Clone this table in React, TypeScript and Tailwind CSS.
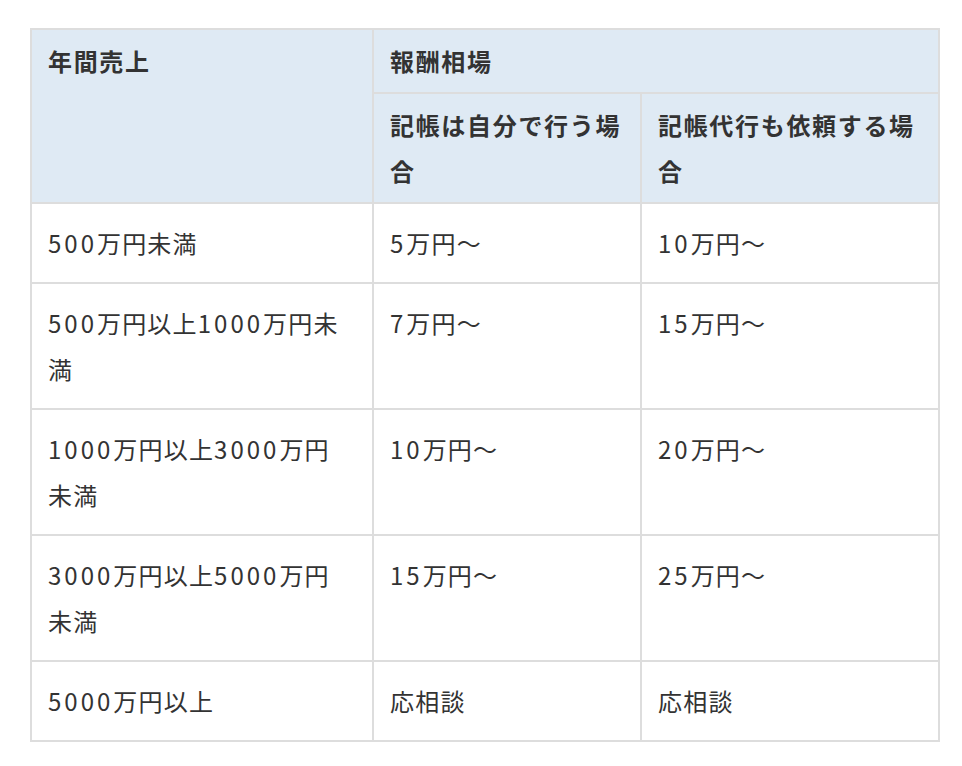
import { Fragment } from "react";

// 数字だけ少し広めに詰める（参照の数字幅に合わせる）
function Txt({ s }: { s: string }) {
  const parts = s.split(/(\d+)/).filter((p) => p !== "");
  return (
    <>
      {parts.map((p, i) =>
        /^\d+$/.test(p) ? (
          <span key={i} className="tracking-[0.125em]">
            {p}
          </span>
        ) : (
          <Fragment key={i}>{p}</Fragment>
        )
      )}
    </>
  );
}

export default function App() {
  const rows = [
    ["500万円未満", "5万円〜", "10万円〜"],
    ["500万円以上1000万円未満", "7万円〜", "15万円〜"],
    ["1000万円以上3000万円未満", "10万円〜", "20万円〜"],
    ["3000万円以上5000万円未満", "15万円〜", "25万円〜"],
    ["5000万円以上", "応相談", "応相談"],
  ];

  const th =
    "border-2 border-[#dddddd] bg-[#dfeaf4] px-4 py-2 text-left align-top font-bold tracking-[0.07em]";
  const td = "border-2 border-[#dddddd] py-4 pl-4 pr-5 text-left align-top";

  return (
    <div
      className="min-h-[766px] bg-white pt-[28px] pl-[30px] text-[#333333]"
      style={{ fontFamily: '"Noto Sans CJK JP", "Noto Sans", sans-serif' }}
    >
      <table className="w-[908px] table-fixed border-collapse text-[24px] leading-[46px] tracking-[0.05em]">
        <colgroup>
          <col className="w-[342px]" />
          <col className="w-[268px]" />
          <col className="w-[298px]" />
        </colgroup>
        <thead>
          <tr>
            <th rowSpan={2} className={th}>
              年間売上
            </th>
            <th colSpan={2} className={th}>
              報酬相場
            </th>
          </tr>
          <tr>
            <th className={th}>記帳は自分で行う場合</th>
            <th className={th}>記帳代行も依頼する場合</th>
          </tr>
        </thead>
        <tbody>
          {rows.map((r) => (
            <tr key={r[0]}>
              <td className={td}>
                <Txt s={r[0]} />
              </td>
              <td className={td}>
                <Txt s={r[1]} />
              </td>
              <td className={td}>
                <Txt s={r[2]} />
              </td>
            </tr>
          ))}
        </tbody>
      </table>
    </div>
  );
}
